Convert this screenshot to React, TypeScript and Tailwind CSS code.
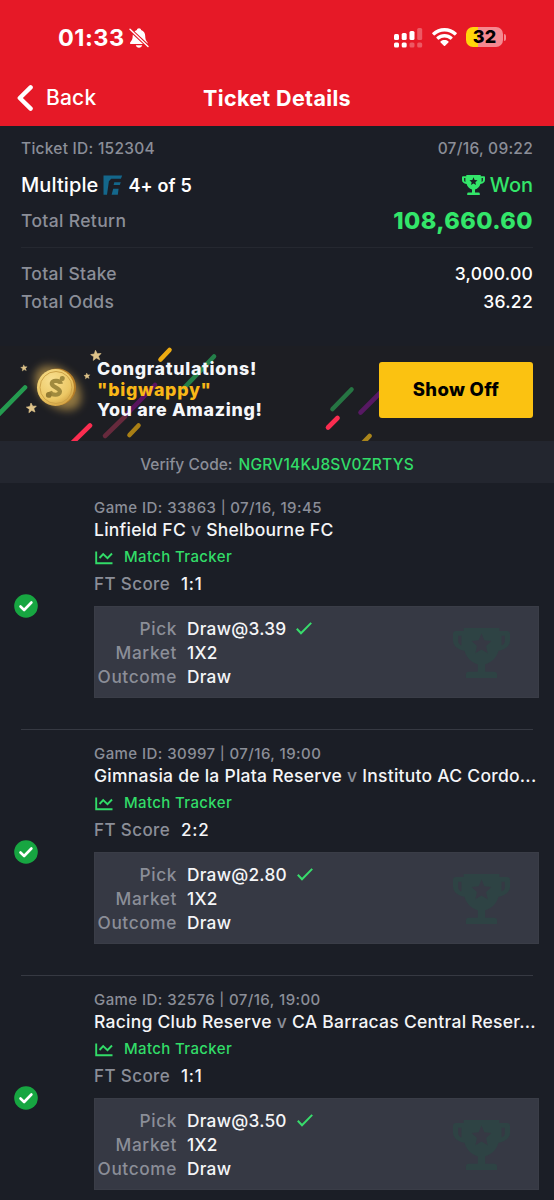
import React from "react";

type Game = {
  id: string;
  time: string;
  home: string;
  away: string;
  score: string;
  pick: string;
};

const games: Game[] = [
  { id: "33863", time: "07/16, 19:45", home: "Linfield FC", away: "Shelbourne FC", score: "1:1", pick: "Draw@3.39" },
  { id: "30997", time: "07/16, 19:00", home: "Gimnasia de la Plata Reserve", away: "Instituto AC Cordo...", score: "2:2", pick: "Draw@2.80" },
  { id: "32576", time: "07/16, 19:00", home: "Racing Club Reserve", away: "CA Barracas Central Reser...", score: "1:1", pick: "Draw@3.50" },
];

function Trophy({ className }: { className: string }) {
  return (
    <svg viewBox="0 0 23 20" className={className} fill="currentColor" preserveAspectRatio="none">
      <path
        fillRule="evenodd"
        d="M4.300 0h14.400v1.200h3.300q1 0 1 1v2.800c0 2-1.600 3.600-4.600 4.100-.8 2.700-2.800 4.700-5.400 5.400v3h3.600q1.200 0 1.200 1.200V20H5.200v-1.300q0-1.200 1.200-1.200H10v-3C7.400 13.800 5.400 11.800 4.600 9.100 1.600 8.600 0 7 0 5V2.200q0-1 1-1h3.300zM2.100 3.100v2.200c0 .8.500 1.400 1.300 1.700V3.100zM20.900 3.100h-1.300V7c.8-.3 1.300-.9 1.300-1.700zM11.500 2.200l-1.150 2.700-2.850.3 2.130 2-.6 2.900 2.470-1.500 2.470 1.500-.6-2.900 2.130-2-2.850-.3z"
      />
    </svg>
  );
}

function Star({ x, y, s }: { x: number; y: number; s: number }) {
  return (
    <path
      transform={`translate(${x} ${y}) rotate(-6) scale(${s})`}
      d="M0-1 .28-.33 1-.28.45.19.62.88 0 .5-.62.88-.45.19-1-.28-.28-.33z"
      fill="#dfc48a"
      stroke="#dfc48a"
      strokeWidth=".12"
      strokeLinejoin="round"
    />
  );
}

function Confetti() {
  return (
    <svg viewBox="0 0 554 95" className="absolute inset-0 h-[95px] w-[554px]">
      <defs>
        <radialGradient id="gold" cx=".4" cy=".3" r=".8">
          <stop offset="0" stopColor="#f8df90" />
          <stop offset=".65" stopColor="#ecc865" />
          <stop offset="1" stopColor="#c99436" />
        </radialGradient>
        <filter id="glow" x="-50%" y="-50%" width="200%" height="200%">
          <feGaussianBlur stdDeviation="4.200" />
        </filter>
      </defs>
      <g strokeWidth="4.600" strokeLinecap="round" fill="none">
        <path d="M-6 73 25 41.500" stroke="#259b50" />
        <path d="M66 103 90 79.500" stroke="#fb2d50" />
        <path d="m160.500 13.500 9-9.500" stroke="#edac12" />
        <path d="m184 42 30-31.500" stroke="#24804a" />
        <path d="m105 90 20-19.500" stroke="#672a3d" />
        <path d="m127 68 28-29" stroke="#58135e" />
        <path d="m129.500 89 9-9.500" stroke="#a97f15" />
        <path d="m332.500 63 19-19.500" stroke="#267543" />
        <path d="m328 81.500 9.500-9.500" stroke="#fb2d50" />
        <path d="m360.500 66.500 24-24" stroke="#571963" />
        <path d="m359 101 10.500-11" stroke="#aa851b" />
      </g>
      <ellipse cx="58" cy="42" rx="27" ry="17.500" fill="#cfa650" opacity=".65" filter="url(#glow)" transform="rotate(42 58 42)" />
      <circle cx="57.500" cy="41" r="18.500" fill="#b47d28" />
      <circle cx="55.500" cy="41.500" r="18.500" fill="url(#gold)" />
      <circle cx="56" cy="41.500" r="16" fill="none" stroke="#cda348" strokeWidth="1" />
      <g transform="rotate(5 56 41)">
        <path d="M60.500 37.500c-.5-3-8-4-9 0-.5 4 8.500 3.500 8.800 7.700.2 4.500-8 4.700-10 .8" fill="none" stroke="#a08a3e" strokeWidth="4.200" />
        <circle cx="61.500" cy="32" r="2.500" fill="#a08a3e" />
        <circle cx="49.500" cy="49.500" r="2.900" fill="#927b34" />
      </g>
      <Star x={96} y={9.500} s={5.2} />
      <Star x={24} y={22} s={3.2} />
      <Star x={87} y={30} s={3} />
      <Star x={31.5} y={62} s={5} />
    </svg>
  );
}

function StatusBar() {
  return (
    <div className="flex h-[70px] items-center justify-between pt-[6px] pr-[48px] pl-[58px]">
      <div className="flex items-center gap-[4px]">
        <span className="w-[67px] text-[23.500px] leading-none font-bold tracking-[0.5px]">01:33</span>
        <svg viewBox="0 0 20 20" className="h-[20px] w-[20px]">
          <path
            d="M10 .3c1.200 0 2 .8 2.100 1.700 2.700.9 4.100 3.100 4.100 5.800 0 3.500.9 5 2 6.100.9.9.5 2.200-.8 2.200H2.300c-1.300 0-1.700-1.300-.8-2.200 1.300-1.300 2.200-2.800 2.200-6.100 0-2.700 1.400-4.900 4.200-5.800C8 1.100 8.800.3 10 .3zM6.800 17.300h6.400c-.4 1.500-1.600 2.500-3.200 2.500s-2.800-1-3.200-2.500z"
            fill="#fff"
          />
          <path d="m1 1.500 18 16.800" stroke="#e61927" strokeWidth="3.600" />
          <path d="m1 1.200 18 17.300" stroke="#fff" strokeWidth="1.400" strokeLinecap="round" />
        </svg>
      </div>
      <div className="flex items-center">
        <svg viewBox="0 0 29 20" className="h-[20px] w-[29px]" fill="#fff">
          <rect x="0" y="6" width="5" height="6" rx="1.500" />
          <rect x="7.700" y="5" width="5" height="7" rx="1.500" />
          <rect x="15.500" y="3" width="5" height="9" rx="1.500" />
          <rect x="23.200" y="0" width="5" height="12" rx="1.500" opacity=".28" />
          <rect x="0" y="14.500" width="5" height="5" rx="1.500" />
          <rect x="7.700" y="14.500" width="5" height="5" rx="1.500" />
          <rect x="15.500" y="14.500" width="5" height="5" rx="1.500" opacity=".28" />
          <rect x="23.200" y="14.500" width="5" height="5" rx="1.500" opacity=".28" />
        </svg>
        <svg viewBox="0 0 25 18" className="mt-[-2px] ml-[9px] h-[18px] w-[25px]" fill="#fff">
          <path d="M12.500 0C7.800 0 3.600 1.800.4 4.700c-.4.400-.4.800-.1 1.100l1.500 1.500c.3.300.7.300 1 0C5.400 5 8.800 3.600 12.500 3.600S19.600 5 22.200 7.300c.3.300.7.300 1 0l1.500-1.500c.3-.3.3-.7-.1-1.100C21.400 1.800 17.200 0 12.500 0z" />
          <path d="M12.500 6c-3 0-5.800 1.100-7.900 3-.4.300-.4.800-.1 1.100L6 11.600c.3.300.7.300 1 0 1.500-1.300 3.400-2.100 5.500-2.100s4 .8 5.500 2.100c.3.300.7.300 1 0l1.500-1.500c.3-.3.3-.8-.1-1.100-2.100-1.900-4.900-3-7.900-3z" />
          <path d="M12.500 12c-1.500 0-2.800.5-3.800 1.300-.4.300-.4.800-.1 1.100l3.300 3.300c.400.400.8.400 1.200 0l3.300-3.300c.3-.3.3-.8-.1-1.100-1-.8-2.300-1.300-3.800-1.300z" />
        </svg>
        <div className="mt-[-2px] ml-[9px] flex h-[20px] w-[37px] items-center justify-center rounded-[7px] bg-[linear-gradient(90deg,#ffd60a_0_12px,#f58990_12px)] text-[18px] leading-none font-extrabold text-black">
          32
        </div>
        <div className="mt-[-2px] ml-[1px] h-[7px] w-[2px] rounded-r-full bg-[#f58990]" />
      </div>
    </div>
  );
}

function GameItem({ game }: { game: Game }) {
  return (
    <li className="h-[246px]">
      <div className="flex h-[246px] items-center">
        <div className="flex w-[94px] pl-[14px]">
          <svg viewBox="0 0 24 24" className="h-[24px] w-[24px]">
            <circle cx="12" cy="12" r="11.800" fill="#17a641" />
            <path d="m6.500 12.500 3.600 3.500 7.300-7.500" fill="none" stroke="#fff" strokeWidth="2.600" strokeLinecap="round" strokeLinejoin="round" />
          </svg>
        </div>
        <div className="h-full w-[445px] pt-[15px]">
          <div className="flex h-[20px] items-center text-[15px] font-medium whitespace-pre text-[#8b8e98]">
            <span className="tracking-[0.43px]">
              Game ID: {game.id} <span className="relative -top-px text-[13px]">|</span> {game.time}
            </span>
          </div>
          <div className="flex h-[25px] items-center text-[17.500px] font-medium whitespace-pre text-[#f4f5f7]">
            <span className="tracking-[0.25px]">
              {game.home} <span className="text-[#8b8e98]">v</span> {game.away}
            </span>
          </div>
          <div className="flex h-[29px] items-center text-[15px] font-medium text-[#32dc68]">
            <svg viewBox="0 0 18 14" className="ml-[1px] h-[14px] w-[18px]" fill="none" stroke="currentColor" strokeWidth="1.900">
              <path d="M1.200.5v11.800h16.300" />
              <path d="m4.500 7 3.700-3.900 4.300 4 4.500-4.600" />
            </svg>
            <span className="ml-[11px] tracking-[0.36px]">Match Tracker</span>
          </div>
          <div className="flex h-[26px] items-center text-[17px] font-medium">
            <span className="w-[87px] tracking-[0.4px] text-[#8b8e98]">FT Score</span>
            <span className="tracking-[0.8px] text-[#f4f5f7]">{game.score}</span>
          </div>
          <div className="mt-[8px] flex h-[92px] w-[445px] items-center border border-[#3a3d47] bg-[#363944] pt-[1px] text-[17.300px] leading-[24px] font-medium">
            <div className="w-[82px] text-right tracking-[0.6px] text-[#8b8e98]">
              <div>Pick</div>
              <div>Market</div>
              <div>Outcome</div>
            </div>
            <div className="ml-[10px] text-[#f4f5f7]">
              <div className="flex items-center">
                <span className="tracking-[0.25px]">{game.pick}</span>
                <svg viewBox="0 0 16 13" className="ml-[10px] h-[13px] w-[16px]" fill="none" stroke="#38dc6c" strokeWidth="2">
                  <path d="m.8 6.800 4.200 4.400L15.200.9" />
                </svg>
              </div>
              <div className="tracking-[0.25px]">1X2</div>
              <div className="tracking-[0.25px]">Draw</div>
            </div>
            <Trophy className="mr-[28px] ml-auto h-[50px] w-[57px] text-[#2e4344]" />
          </div>
        </div>
      </div>
      <div className="mx-[21px] h-px bg-[#363942]" />
    </li>
  );
}

export default function App() {
  return (
    <div className="h-[1200px] w-[554px] overflow-hidden bg-[#1b1e26] font-[Inter,sans-serif]">
      <header className="h-[126px] bg-[#e61927] text-white">
        <StatusBar />
        <div className="grid h-[56px] grid-cols-[1fr_auto_1fr] items-center">
          <div className="flex items-center pl-[17px]">
            <svg viewBox="0 0 16 26" className="h-[26px] w-[16px]" fill="none" stroke="#fff" strokeWidth="4.400" strokeLinecap="round" strokeLinejoin="round">
              <path d="M13.600 2.400 2.800 13l10.800 10.600" />
            </svg>
            <span className="ml-[13px] text-[21px] font-medium tracking-[0.2px]">Back</span>
          </div>
          <h1 className="text-[21.500px] font-bold tracking-[0.35px]">Ticket Details</h1>
          <div />
        </div>
      </header>

      <section className="h-[220px] px-[21px] pt-[11px]">
        <div className="flex h-[24px] items-center justify-between text-[15.500px] font-medium text-[#8b8e98]">
          <span className="tracking-[0.26px]">Ticket ID: 152304</span>
          <span className="tracking-[0.26px]">07/16, 09:22</span>
        </div>
        <div className="mt-[6px] flex h-[36px] items-center justify-between">
          <div className="flex items-center text-white">
            <span className="text-[20px] font-medium tracking-[0.1px]">Multiple</span>
            <svg viewBox="0 0 20 20" className="ml-[5px] h-[20px] w-[20px]" fill="#14678b">
              <path d="M.5.5h18.700l-1.300 3.200H8.200L5.900 6.200 4 19.700H.5z" />
              <path d="M11.300 7.300h6.500l-1 2.700h-6.200zM10.200 13.800h5.400l-.8 5.900H8.600z" />
            </svg>
            <span className="ml-[5px] text-[18px] font-semibold tracking-[0.15px]">4+ of 5</span>
          </div>
          <div className="flex items-center text-[#33e66a]">
            <Trophy className="h-[20px] w-[23px]" />
            <span className="ml-[5px] text-[20px] font-medium">Won</span>
          </div>
        </div>
        <div className="flex h-[36px] items-center justify-between">
          <span className="text-[17.500px] font-medium tracking-[0.35px] text-[#8b8e98]">Total Return</span>
          <span className="text-[23.500px] font-extrabold tracking-[0.45px] text-[#33e66a]">108,660.60</span>
        </div>
        <div className="mt-[8px] h-px bg-[#252830]" />
        <div className="mt-[12px] text-[17.500px] leading-[28px] font-medium">
          <div className="flex justify-between">
            <span className="tracking-[0.3px] text-[#8b8e98]">Total Stake</span>
            <span className="tracking-[0.25px] text-white">3,000.00</span>
          </div>
          <div className="flex justify-between">
            <span className="tracking-[0.3px] text-[#8b8e98]">Total Odds</span>
            <span className="tracking-[0.3px] text-white">36.22</span>
          </div>
        </div>
      </section>

      <section className="relative h-[95px] overflow-hidden bg-[#1d1e23]">
        <Confetti />
        <div className="relative flex h-[88px] items-center justify-between pr-[21px] pl-[97px]">
          <div className="text-[17.800px] leading-[20.500px] font-extrabold tracking-[0.7px] text-[#f5f7fa]">
            <div>Congratulations!</div>
            <div className="text-[#f9b717]">"bigwappy"</div>
            <div>You are Amazing!</div>
          </div>
          <button className="mt-[-1px] h-[56px] w-[154px] rounded-[3px] bg-[#fbc211] text-[18.500px] font-extrabold tracking-[0.3px] text-black">Show Off</button>
        </div>
      </section>

      <div className="flex h-[42px] items-center justify-center bg-[#23262f] pt-[5px] text-[15.500px] font-medium">
        <span className="text-[#8b8e98]">Verify Code:</span>
        <span className="ml-[6px] tracking-[0.2px] text-[#32dc68]">NGRV14KJ8SV0ZRTYS</span>
      </div>

      <ul>
        {games.map((g) => (
          <GameItem key={g.id} game={g} />
        ))}
      </ul>
    </div>
  );
}
